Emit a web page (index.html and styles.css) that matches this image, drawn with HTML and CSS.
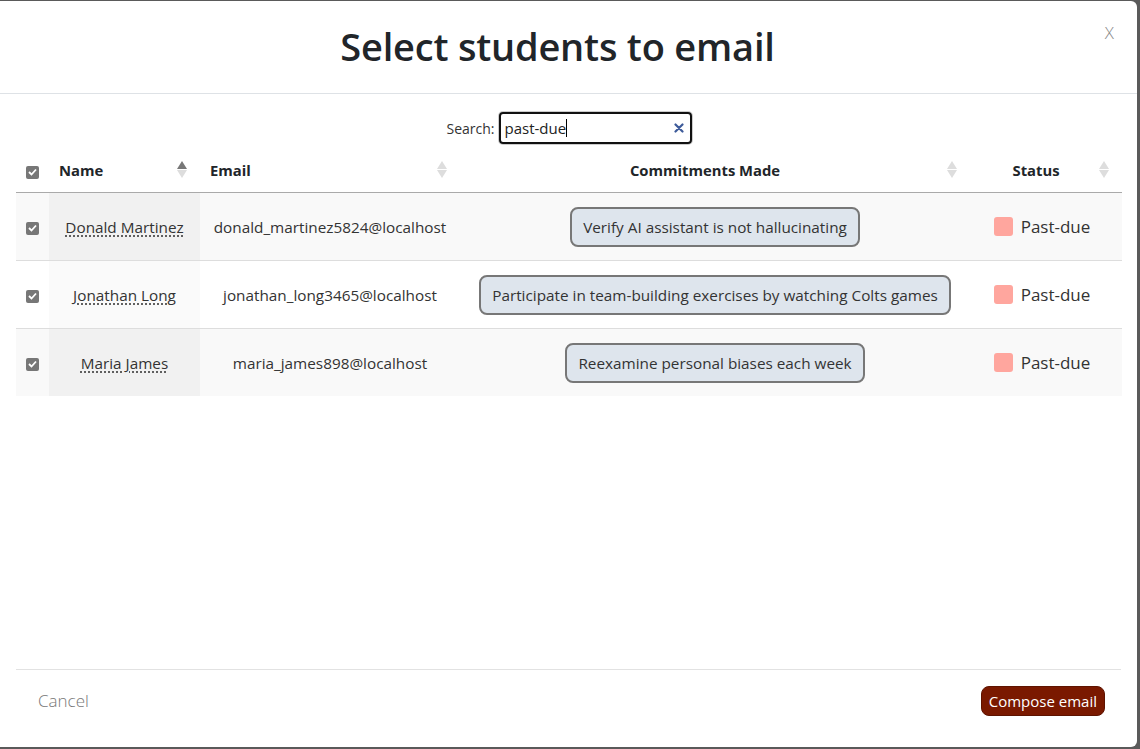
FILE: index.html
```html
<!DOCTYPE html>
<html>
<head>
<meta charset="utf-8">
<link rel="stylesheet" href="styles.css">
</head>
<body>
<div class="modal">
  <header class="modal-header">
    <h1 class="title">Select students to email</h1>
    <span class="close">X</span>
  </header>
  <div class="modal-body">
    <div class="search-row">
      <label class="search-label">Search:</label>
      <div class="search-box">
        <span class="search-text">past-due</span><span class="caret"></span>
        <svg class="clear" width="10" height="10" viewBox="0 0 10 10"><path d="M1.5 1.5 L8.5 8.5 M8.5 1.5 L1.5 8.5" stroke="#3e5b9a" stroke-width="2.2" stroke-linecap="round"/></svg>
      </div>
    </div>
    <table class="tbl">
      <colgroup>
        <col class="c-check"><col class="c-name"><col class="c-email"><col class="c-commit"><col class="c-status">
      </colgroup>
      <thead>
        <tr>
          <th class="th-check"><span class="cb"><svg width="9" height="8" viewBox="0 0 9 8"><path d="M1 4 L3.5 6.5 L8 1.5" stroke="#fff" stroke-width="1.8" fill="none"/></svg></span></th>
          <th class="th-left sortable">Name<span class="sort"><i class="up dark"></i><i class="down"></i></span></th>
          <th class="th-left sortable">Email<span class="sort"><i class="up"></i><i class="down"></i></span></th>
          <th class="th-center sortable">Commitments Made<span class="sort"><i class="up"></i><i class="down"></i></span></th>
          <th class="th-center sortable">Status<span class="sort"><i class="up"></i><i class="down"></i></span></th>
        </tr>
      </thead>
      <tbody>
        <tr class="odd">
          <td class="td-check"><span class="cb"><svg width="9" height="8" viewBox="0 0 9 8"><path d="M1 4 L3.5 6.5 L8 1.5" stroke="#fff" stroke-width="1.8" fill="none"/></svg></span></td>
          <td class="td-name"><abbr class="name">Donald Martinez</abbr></td>
          <td class="td-email">donald_martinez5824@localhost</td>
          <td class="td-commit"><span class="pill">Verify AI assistant is not hallucinating</span></td>
          <td class="td-status"><span class="status"><span class="sq"></span>Past-due</span></td>
        </tr>
        <tr class="even">
          <td class="td-check"><span class="cb"><svg width="9" height="8" viewBox="0 0 9 8"><path d="M1 4 L3.5 6.5 L8 1.5" stroke="#fff" stroke-width="1.8" fill="none"/></svg></span></td>
          <td class="td-name"><abbr class="name">Jonathan Long</abbr></td>
          <td class="td-email">jonathan_long3465@localhost</td>
          <td class="td-commit"><span class="pill">Participate in team-building exercises by watching Colts games</span></td>
          <td class="td-status"><span class="status"><span class="sq"></span>Past-due</span></td>
        </tr>
        <tr class="odd">
          <td class="td-check"><span class="cb"><svg width="9" height="8" viewBox="0 0 9 8"><path d="M1 4 L3.5 6.5 L8 1.5" stroke="#fff" stroke-width="1.8" fill="none"/></svg></span></td>
          <td class="td-name"><abbr class="name">Maria James</abbr></td>
          <td class="td-email">maria_james898@localhost</td>
          <td class="td-commit"><span class="pill">Reexamine personal biases each week</span></td>
          <td class="td-status"><span class="status"><span class="sq"></span>Past-due</span></td>
        </tr>
      </tbody>
    </table>
    <div class="spacer"></div>
    <footer class="modal-footer">
      <span class="cancel">Cancel</span>
      <button class="compose">Compose email</button>
    </footer>
  </div>
</div>
</body>
</html>
```
FILE: styles.css
```css
html, body {
  margin: 0;
  padding: 0;
  background: #5a5a5a;
  height: 749px;
  overflow: hidden;
}
body {
  font-family: "Open Sans", "Noto Sans", sans-serif;
  color: #212529;
}
.modal {
  width: 1137px;
  height: 746px;
  background: #fff;
  border-radius: 0 6px 6px 0;
  margin-top: 1px;
  display: flex;
  flex-direction: column;
}
.modal-header {
  position: relative;
  height: 92px;
  border-bottom: 1px solid #dee2e6;
  display: flex;
  align-items: center;
  justify-content: center;
  padding-right: 22px;
}
.title {
  margin: 0;
  font-size: 38px;
  font-weight: 600;
  color: #212529;
  letter-spacing: -0.2px;
  padding-bottom: 2px;
}
.close {
  position: absolute;
  right: 23px;
  top: 20px;
  font-size: 17px;
  color: #888;
  font-weight: 300;
}
.modal-body {
  flex: 1;
  display: flex;
  flex-direction: column;
  padding: 0 15px 0 16px;
}
.search-row {
  display: flex;
  justify-content: center;
  align-items: center;
  padding-top: 18px;
  gap: 4px;
}
.search-label {
  font-size: 14px;
  color: #333;
}
.search-box {
  width: 185px;
  height: 28px;
  border: 2px solid #111;
  border-radius: 4px;
  display: flex;
  align-items: center;
  padding-left: 4px;
  position: relative;
  box-shadow: 0 0 0 1px #ccc;
}
.search-text {
  font-size: 15px;
  color: #222;
}
.caret {
  width: 1px;
  height: 18px;
  background: #000;
}
.clear {
  position: absolute;
  right: 6px;
  top: 9px;
}
.tbl {
  width: 1106px;
  border-collapse: collapse;
  table-layout: fixed;
  margin-top: 8px;
}
.c-check { width: 33px; }
.c-name { width: 151px; }
.c-email { width: 260px; }
.c-commit { width: 510px; }
.c-status { width: 152px; }
th {
  height: 36px;
  font-size: 14.8px;
  font-weight: 700;
  color: #212529;
  border-bottom: 1px solid #aaa;
  position: relative;
  padding: 0 30px 4px 10px;
}
.th-check { padding: 0 0 4px 0; text-align: center; }
.th-left { text-align: left; }
.th-center { text-align: center; }
.sort {
  position: absolute;
  right: 13px;
  top: 9px;
  display: flex;
  flex-direction: column;
  gap: 1px;
}
.sort i {
  display: block;
  width: 0;
  height: 0;
  border-left: 5px solid transparent;
  border-right: 5px solid transparent;
}
.sort .up { border-bottom: 8px solid #ddd; }
.sort .down { border-top: 8px solid #ddd; }
.sort .up.dark { border-bottom-color: #777; }
.cb {
  display: inline-flex;
  width: 13px;
  height: 13px;
  background: #777;
  border-radius: 2px;
  align-items: center;
  justify-content: center;
  vertical-align: middle;
}
td {
  height: 67px;
  font-size: 15.3px;
  color: #333;
  border-bottom: 1px solid #ddd;
  text-align: center;
  padding: 0 10px;
}
tbody tr:last-child td { border-bottom: none; }
.td-check { padding: 0; }
.td-status { padding: 0 14px 0 6px; }
tr.odd td { background: #f9f9f9; }
tr.odd td.td-name { background: #f1f1f1; }
tr.even td { background: #fff; }
tr.even td.td-name { background: #fafafa; }
.name {
  text-decoration: underline dotted #333;
  text-underline-offset: 3px;
  font-size: 15.3px;
}
.pill {
  display: inline-block;
  background: #dee5ed;
  border: 2px solid #777;
  border-radius: 8px;
  padding: 8px 11px;
  font-size: 15.3px;
  color: #333;
  white-space: nowrap;
}
.status {
  display: inline-flex;
  align-items: center;
  gap: 8px;
  font-size: 17px;
  color: #333;
  padding-top: 2px;
}
.sq {
  width: 19px;
  height: 19px;
  border-radius: 3px;
  background: #ffa69e;
}
.spacer { flex: 1; }
.modal-footer {
  border-top: 1px solid #e2e2e2;
  height: 61px;
  display: flex;
  align-items: flex-start;
  justify-content: space-between;
  padding: 16px 0 0 22px;
  margin-right: 1px;
}
.cancel {
  font-size: 17px;
  color: #777;
  font-weight: 300;
  line-height: 30px;
}
.compose {
  background: #7a1900;
  color: #fff;
  border: 1px solid #5e1300;
  border-radius: 8px;
  font-family: "Open Sans", "Noto Sans", sans-serif;
  font-size: 15px;
  padding: 3px 7px;
  height: 30px;
  margin-right: 16px;
}
```
